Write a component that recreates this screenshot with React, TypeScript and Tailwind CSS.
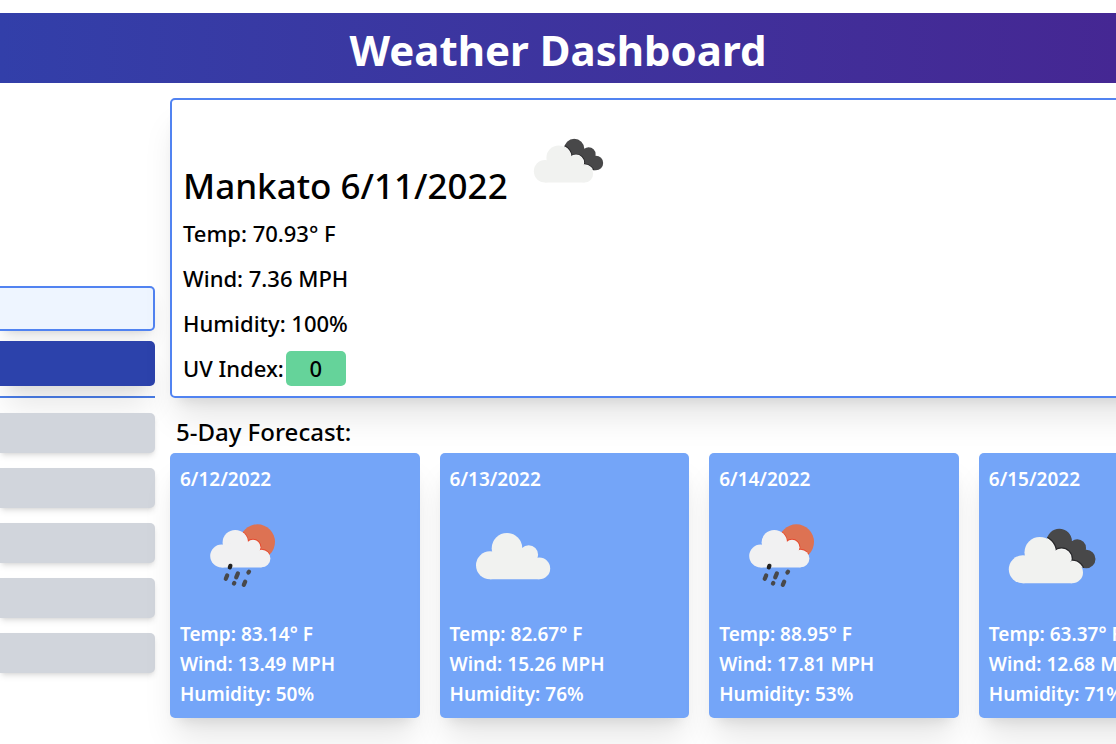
import React from 'react';

type Sky = 'rain' | 'cloudy' | 'broken';

interface Day {
  date: string;
  sky: Sky;
  temp: string;
  wind: string;
  humidity: string;
}

const days: Day[] = [
  { date: '6/12/2022', sky: 'rain', temp: '83.14', wind: '13.49', humidity: '50' },
  { date: '6/13/2022', sky: 'cloudy', temp: '82.67', wind: '15.26', humidity: '76' },
  { date: '6/14/2022', sky: 'rain', temp: '88.95', wind: '17.81', humidity: '53' },
  { date: '6/15/2022', sky: 'broken', temp: '63.37', wind: '12.68', humidity: '71' },
];

const savedSearches = [1, 2, 3, 4, 5];

function Cloud() {
  return (
    <>
      <circle cx="40" cy="72.3" r="14" />
      <circle cx="57" cy="55.3" r="15.3" />
      <circle cx="78.7" cy="61.7" r="9.4" />
      <circle cx="89.3" cy="75.4" r="10.9" />
      <path d="M40 60 L57 55 L79 62 L89.3 70 V86.3 H40 Z" />
    </>
  );
}

function WeatherIcon({ sky, className }: { sky: Sky; className: string }) {
  return (
    <svg viewBox="0 1 125 125" className={className} aria-hidden="true">
      {sky === 'cloudy' && (
        <g fill="#f1f2f0">
          <Cloud />
        </g>
      )}
      {sky === 'broken' && (
        <>
          <clipPath id="cloud-edge">
            <circle cx="70.3" cy="48.3" r="12.6" />
            <circle cx="88.3" cy="55" r="8.7" />
            <circle cx="97.3" cy="66" r="9.2" />
            <path d="M70 48 L88 54 L98 66 L92 74 L70 62 Z" />
          </clipPath>
          <g clipPath="url(#cloud-edge)">
            <rect width="125" height="125" fill="#484849" />
            <g transform="translate(-6.2 4)" fill="none">
              <g stroke="#29292b" strokeWidth="4">
                <Cloud />
              </g>
              <g stroke="#fafafa" strokeWidth="1.6">
                <Cloud />
              </g>
            </g>
          </g>
          <g transform="translate(-6.2 4)" fill="#f1f2f0">
            <Cloud />
          </g>
        </>
      )}
      {sky === 'rain' && (
        <>
          <clipPath id="sun-disc">
            <circle cx="77.4" cy="48.9" r="17.6" />
          </clipPath>
          <g clipPath="url(#sun-disc)">
            <rect width="125" height="125" fill="#dd7253" />
            <g fill="none" stroke="#e6492d" strokeWidth="1.8">
              <circle cx="55.3" cy="49.6" r="12.7" />
              <circle cx="73" cy="54.2" r="7.5" />
              <circle cx="81.6" cy="65.5" r="8.8" />
            </g>
          </g>
          <g fill="#f1f1f2">
            <circle cx="41.6" cy="63" r="11.4" />
            <circle cx="55.3" cy="49.6" r="12.7" />
            <circle cx="73" cy="54.2" r="7.5" />
            <circle cx="81.6" cy="65.5" r="8.8" />
            <path d="M41.6 53 L55 49 L73 54 L81.6 62 V74.4 H41.6 Z" />
          </g>
          <g stroke="#48484a" strokeWidth="4.2" strokeLinecap="round">
            <path d="M50.4 72.8 L49.8 74.4" stroke="#222" />
            <path d="M47.2 82.4 L45.8 85.8" />
            <path d="M57.9 80.4 L56.2 84.4" />
            <path d="M69 78.7 L68.4 79.5" />
            <path d="M54.3 90 L53.9 90.6" />
            <path d="M65.2 88.7 L63.8 91.8" />
          </g>
        </>
      )}
    </svg>
  );
}

function ForecastCard({ day }: { day: Day }) {
  return (
    <li className="rounded-[5px] bg-[#74a5f8] px-2.5 pt-[11px] pb-[9px] text-[19px] leading-[30px] font-semibold whitespace-nowrap text-white shadow-[0_25px_31px_-6px_rgb(0_0_0/0.1),0_10px_13px_-8px_rgb(0_0_0/0.1)]">
      <h3>{day.date}</h3>
      <WeatherIcon sky={day.sky} className="h-[125px] w-[125px]" />
      <p>Temp: {day.temp}° F</p>
      <p>Wind: {day.wind} MPH</p>
      <p>Humidity: {day.humidity}%</p>
    </li>
  );
}

export default function App() {
  return (
    <div className="min-h-screen overflow-hidden bg-white pt-[13px] pb-[26px] font-['Segoe_UI','Noto_Sans','Open_Sans',sans-serif] text-black">
      <header className="bg-gradient-to-r from-[#323fa9] to-[#452793] pt-[7px] pb-[3px]">
        <h1 className="text-center text-[42px] leading-[60px] font-bold text-white">Weather Dashboard</h1>
      </header>

      <div className="mt-[15px] flex gap-[15px]">
        <aside className="w-[155px] shrink-0 pt-[188px]">
          <form onSubmit={(e) => e.preventDefault()} className="border-b-2 border-[#4a7de8] pb-2.5">
            <input
              type="text"
              aria-label="City"
              className="block h-[45px] w-full rounded-r-[5px] border-2 border-l-0 border-[#5183f1] bg-[#eef5ff] px-2.5 text-[20px] shadow-[0_12px_19px_-4px_rgb(0_0_0/0.1),0_5px_7px_-5px_rgb(0_0_0/0.1)]"
            />
            <button
              type="submit"
              aria-label="Search"
              className="mt-2.5 block h-[45px] w-full rounded-r-[5px] bg-[#2c42ab] shadow-[0_25px_31px_-6px_rgb(0_0_0/0.1),0_10px_13px_-8px_rgb(0_0_0/0.1)]"
            />
          </form>
          <div className="mt-[15px] flex flex-col gap-[15px]">
            {savedSearches.map((n) => (
              <button
                key={n}
                type="button"
                aria-label={`Saved search ${n}`}
                className="h-10 w-full rounded-r-[5px] bg-[#d1d5dc] shadow-md"
              />
            ))}
          </div>
        </aside>

        <main className="min-w-[1328px] flex-1">
          <section className="rounded-[5px] border-2 border-[#5183f1] px-[11px] pt-2.5 pb-[5px] text-[22px] leading-[45px] font-medium shadow-[0_25px_31px_-6px_rgb(0_0_0/0.1),0_10px_13px_-8px_rgb(0_0_0/0.1)]">
            <div className="flex h-[101px] items-end gap-2.5">
              <h2 className="text-[35px] leading-[50px]">Mankato 6/11/2022</h2>
              <WeatherIcon sky="broken" className="h-[100px] w-[100px]" />
            </div>
            <p>Temp: 70.93° F</p>
            <p>Wind: 7.36 MPH</p>
            <p>Humidity: 100%</p>
            <p className="flex items-center gap-0.5">
              UV Index:
              <span className="w-[60px] rounded-[5px] bg-[#65d39a] text-center leading-[35px]">0</span>
            </p>
          </section>

          <h2 className="mt-3.5 pb-0.5 pl-1.5 text-[24px] leading-[39px] font-medium">5-Day Forecast:</h2>
          <ul className="grid grid-cols-5 gap-5">
            {days.map((day) => (
              <ForecastCard key={day.date} day={day} />
            ))}
          </ul>
        </main>
      </div>
    </div>
  );
}
